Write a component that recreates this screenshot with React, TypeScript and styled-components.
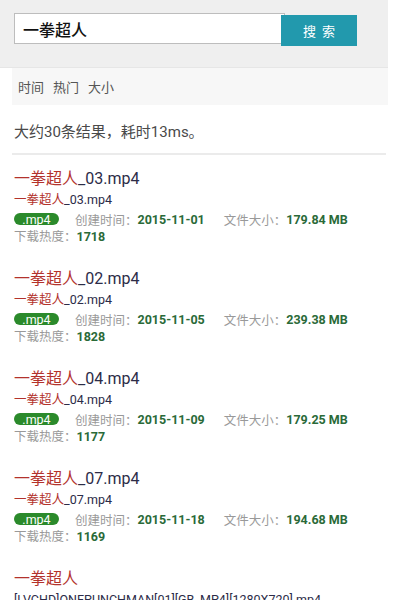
import React from "react";
import styled, { createGlobalStyle } from "styled-components";

const Global = createGlobalStyle`
  html, body { margin: 0; padding: 0; background: #ffffff; }
  body { font-family: Roboto, "Noto Sans CJK SC", sans-serif; overflow: hidden; }
`;

const Page = styled.div`
  width: 388px;
  height: 600px;
  overflow: hidden;
`;

const Header = styled.div`
  background: #efefef;
  height: 68px;
  box-sizing: border-box;
  padding: 13px 0 0 14px;
  border-bottom: 1px solid #e6e6e6;
`;

const SearchForm = styled.form`
  display: flex;
  align-items: flex-start;
  margin: 0;
`;

const SearchInput = styled.div`
  width: 271px;
  height: 31px;
  box-sizing: border-box;
  background: #fff;
  border: 1px solid #bdbdbd;
  font-size: 16px;
  color: #111;
  display: flex;
  align-items: center;
  padding-left: 8px;
  font-weight: 500;
`;

const SearchButton = styled.button`
  margin: 2px 0 0 -4px;
  width: 76px;
  height: 31px;
  border: none;
  background: #2299ad;
  color: #fff;
  font-family: inherit;
  font-size: 13px;
  letter-spacing: 6px;
  padding: 0 0 0 6px;
`;

const SortBar = styled.div`
  margin-left: 12px;
  height: 37px;
  background: #f7f7f7;
  display: flex;
  align-items: center;
  gap: 9px;
  padding-left: 6px;
  font-size: 13px;
  color: #555;
`;

const Content = styled.div`
  padding: 0 2px 0 12px;
`;

const Count = styled.div`
  padding: 16px 0 10px 2px;
  line-height: 22px;
  font-size: 15px;
  color: #4a4a4a;
  border-bottom: 2px solid #ebebeb;
`;

const List = styled.div`
  padding: 13px 0 0 2px;
`;

const Item = styled.div`
  margin-bottom: 23px;
`;

const Title = styled.div`
  font-size: 16px;
  line-height: 22px;
  color: #2c2c48;
`;

const Sub = styled.div`
  font-size: 12.5px;
  line-height: 20px;
  color: #2c2c48;
`;

const Hl = styled.span`
  color: #b3322c;
`;

const Meta = styled.div`
  display: flex;
  align-items: center;
  height: 18px;
  font-size: 12.5px;
  color: #999;
`;

const Badge = styled.span`
  display: inline-flex;
  align-items: center;
  justify-content: center;
  width: 45px;
  height: 12px;
  border-radius: 7px;
  background: #2b8a2b;
  color: #fff;
  font-size: 12.5px;
  margin-right: 16px;
`;

const Label = styled.span<{ $gap?: number }>`
  margin-left: ${(p) => p.$gap ?? 0}px;
`;

const Value = styled.b`
  color: #2a6a38;
  font-weight: 700;
`;

const Heat = styled.div`
  font-size: 12.5px;
  line-height: 17px;
  color: #999;
`;

const Raw = styled.div`
  font-size: 12.5px;
  line-height: 20px;
  color: #2c2c48;
  white-space: nowrap;
`;

const items = [
  { n: "03", date: "2015-11-01", size: "179.84 MB", heat: "1718" },
  { n: "02", date: "2015-11-05", size: "239.38 MB", heat: "1828" },
  { n: "04", date: "2015-11-09", size: "179.25 MB", heat: "1177" },
  { n: "07", date: "2015-11-18", size: "194.68 MB", heat: "1169" },
];

export default function App() {
  return (
    <Page>
      <Global />
      <Header>
        <SearchForm onSubmit={(e) => e.preventDefault()}>
          <SearchInput>一拳超人</SearchInput>
          <SearchButton type="submit">搜索</SearchButton>
        </SearchForm>
      </Header>
      <SortBar>
        <span>时间</span>
        <span>热门</span>
        <span>大小</span>
      </SortBar>
      <Content>
        <Count>大约30条结果，耗时13ms。</Count>
        <List>
          {items.map((it) => (
            <Item key={it.n}>
              <Title>
                <Hl>一拳超人</Hl>_{it.n}.mp4
              </Title>
              <Sub>
                <Hl>一拳超人</Hl>_{it.n}.mp4
              </Sub>
              <Meta>
                <Badge>.mp4</Badge>
                <Label>创建时间：</Label>
                <Value>{it.date}</Value>
                <Label $gap={19}>文件大小：</Label>
                <Value>{it.size}</Value>
              </Meta>
              <Heat>
                下载热度：<Value>{it.heat}</Value>
              </Heat>
            </Item>
          ))}
          <Item>
            <Title>
              <Hl>一拳超人</Hl>
            </Title>
            <Raw>[LVCHD]ONEPUNCHMAN[01][GB_MP4][1280X720].mp4</Raw>
          </Item>
        </List>
      </Content>
    </Page>
  );
}
